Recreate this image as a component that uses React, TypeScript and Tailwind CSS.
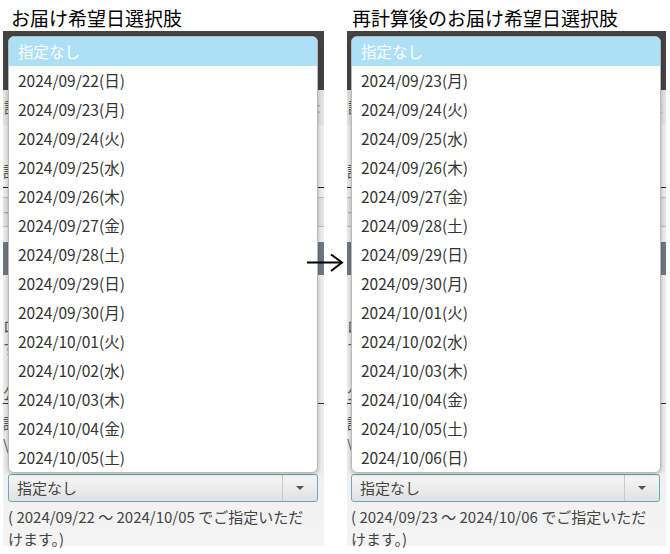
import React from "react";

const WEEK = ["日", "月", "火", "水", "木", "金", "土"];

function dateRange(start: Date, count: number) {
  const out: string[] = [];
  for (let i = 0; i < count; i++) {
    const d = new Date(start.getFullYear(), start.getMonth(), start.getDate() + i);
    const mm = String(d.getMonth() + 1).padStart(2, "0");
    const dd = String(d.getDate()).padStart(2, "0");
    out.push(`${d.getFullYear()}/${mm}/${dd}(${WEEK[d.getDay()]})`);
  }
  return out;
}

const font = { fontFamily: '"Noto Sans CJK JP", "Noto Sans", sans-serif' };

// faded modal content sitting behind the open menu
function PanelBackdrop() {
  return (
    <div className="flex flex-col h-[443px] bg-[#ececec] text-[15px] text-[#555] overflow-hidden">
      <div className="h-[59px] bg-[#444] shrink-0" />
      <div className="h-[35px] bg-[#e2e2e2] flex items-center justify-between px-[1px] shrink-0">
        <span>記</span>
        <span className="text-[13px] text-[#888] pr-[1px]">×</span>
      </div>
      <div className="h-[40px] shrink-0" />
      <div className="h-[13px] flex items-center shrink-0">
        <span>記</span>
      </div>
      <div className="h-[10px] border-b border-[#222] shrink-0" />
      <div className="h-[10px] border-b border-[#bbb] shrink-0" />
      <div className="h-[29px] bg-[#e2e2e2] border-b border-[#bbb] flex items-center shrink-0">
        <span className="text-[#999]">⊣</span>
      </div>
      <div className="h-[15px] shrink-0" />
      <div className="h-[33px] bg-[#6e7780] shrink-0" />
      <div className="h-[40px] shrink-0" />
      <div className="flex flex-col leading-[22px] shrink-0">
        <span>ロ</span>
        <span>す</span>
      </div>
      <div className="h-[24px] shrink-0" />
      <div className="border-b border-[#333] leading-[20px] shrink-0">
        <span>公</span>
      </div>
      <div className="flex flex-col leading-[22px] pt-[8px] shrink-0">
        <span>論</span>
        <span>\</span>
      </div>
    </div>
  );
}

function OpenMenu({ dates, left }: { dates: string[]; left: string }) {
  return (
    <div
      className={`absolute top-[5px] ${left} w-[310px] rounded-[6px] bg-white overflow-hidden border border-[#b9b9b9] shadow-[0_1px_4px_rgba(0,0,0,0.25)]`}
    >
      <div className="h-[29px] flex items-center pl-[9px] bg-[#ade0f5] text-white text-[15.5px]">
        指定なし
      </div>
      {dates.map((d) => (
        <div key={d} className="h-[29px] flex items-center pl-[9px] text-[15.5px] text-[#333]">
          {d}
        </div>
      ))}
    </div>
  );
}

function DatePanel({
  title,
  start,
  menuLeft,
  padLeft,
  innerPad,
  width,
}: {
  title: string;
  start: Date;
  menuLeft: string;
  padLeft: string;
  innerPad: string;
  width: string;
}) {
  const dates = dateRange(start, 14);
  const note = `( ${dates[0].slice(0, 10)} ～ ${dates[13].slice(0, 10)} でご指定いただけます。)`;
  return (
    <div className={`flex flex-col ${width}`}>
      <div className={`h-[31px] flex items-end leading-[26px] text-[19px] text-black ${padLeft}`}>{title}</div>
      <div className="relative h-[515px] bg-gradient-to-b from-[#e8e8e8] via-[#e6e6e6] to-[#f4f4f4]">
        <PanelBackdrop />
        <div className={`pr-[6px] ${innerPad}`}>
          <div className="h-[28px] flex items-stretch border border-[#6ba9b9] rounded-[3px] bg-gradient-to-b from-[#f7f7f7] to-[#e1e1e1]">
            <div className="flex-1 flex items-center pl-[8px] text-[15px] text-[#444]">指定なし</div>
            <div className="w-[35px] border-l border-[#c9c9c9] flex items-center justify-center">
              <div className="w-0 h-0 border-l-[4px] border-r-[4px] border-t-[4px] border-l-transparent border-r-transparent border-t-[#555]" />
            </div>
          </div>
          <p className="pt-[4px] text-[15px] leading-[22px] text-[#444]">{note}</p>
        </div>
        <OpenMenu dates={dates} left={menuLeft} />
      </div>
    </div>
  );
}

export default function App() {
  return (
    <div className="relative w-[670px] h-[554px] bg-white flex pl-[3px] gap-[23px]" style={font}>
      <DatePanel
        title="お届け希望日選択肢"
        start={new Date(2024, 8, 22)}
        menuLeft="left-[5px]"
        padLeft="pl-[8px]"
        innerPad="pl-[5px]"
        width="w-[321px]"
      />
      <DatePanel
        title="再計算後のお届け希望日選択肢"
        start={new Date(2024, 8, 23)}
        menuLeft="left-[4px]"
        padLeft="pl-[5px]"
        innerPad="pl-[4px]"
        width="w-[319px]"
      />
      <svg className="absolute left-[306px] top-[253px]" width="38" height="20" viewBox="0 0 38 20">
        <path d="M1 9.5 H36" stroke="#000" strokeWidth="2" fill="none" />
        <path d="M25 1.5 L36 9.5 L25 18" stroke="#000" strokeWidth="2" fill="none" />
      </svg>
    </div>
  );
}
